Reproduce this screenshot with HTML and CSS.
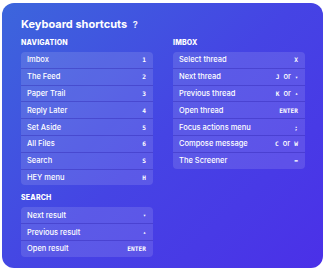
FILE: index.html
```html
<!DOCTYPE html>
<html lang="en">
<head>
    <meta charset="UTF-8">
    <meta name="viewport" content="width=device-width, initial-scale=1.0">
    <title>Keyboard shortcuts</title>
    <link rel="stylesheet" href="styles.css">
</head>
<body>
    <div class="panel">
        <h1 class="title">Keyboard shortcuts <span class="help">?</span></h1>
        <div class="columns">
            <div class="column">
                <h2 class="section">Navigation</h2>
                <ul class="card">
                    <li class="row"><span>Imbox</span><kbd>1</kbd></li>
                    <li class="row"><span>The Feed</span><kbd>2</kbd></li>
                    <li class="row"><span>Paper Trail</span><kbd>3</kbd></li>
                    <li class="row"><span>Reply Later</span><kbd>4</kbd></li>
                    <li class="row"><span>Set Aside</span><kbd>5</kbd></li>
                    <li class="row"><span>All Files</span><kbd>6</kbd></li>
                    <li class="row"><span>Search</span><kbd>S</kbd></li>
                    <li class="row"><span>HEY menu</span><kbd>H</kbd></li>
                </ul>
                <h2 class="section section-gap">Search</h2>
                <ul class="card">
                    <li class="row"><span>Next result</span><kbd class="arrow">&#9662;</kbd></li>
                    <li class="row"><span>Previous result</span><kbd class="arrow">&#9652;</kbd></li>
                    <li class="row"><span>Open result</span><kbd>ENTER</kbd></li>
                </ul>
            </div>
            <div class="column">
                <h2 class="section">Imbox</h2>
                <ul class="card">
                    <li class="row"><span>Select thread</span><kbd>X</kbd></li>
                    <li class="row"><span>Next thread</span><span class="keys"><kbd>J</kbd><em>or</em><kbd class="arrow">&#9662;</kbd></span></li>
                    <li class="row"><span>Previous thread</span><span class="keys"><kbd>K</kbd><em>or</em><kbd class="arrow">&#9652;</kbd></span></li>
                    <li class="row"><span>Open thread</span><kbd>ENTER</kbd></li>
                    <li class="row"><span>Focus actions menu</span><kbd>;</kbd></li>
                    <li class="row"><span>Compose message</span><span class="keys"><kbd>C</kbd><em>or</em><kbd>W</kbd></span></li>
                    <li class="row"><span>The Screener</span><kbd>=</kbd></li>
                </ul>
            </div>
        </div>
    </div>
</body>
</html>
```

FILE: styles.css
```css
body{
    margin: 0;
    background-color: #fff;
    font-family: Inter, "Noto Sans", sans-serif;
}
.panel{
    box-sizing: border-box;
    width: 321px;
    height: 265px;
    margin: 3px 0 0 2px;
    padding: 13px 17px 0 19px;
    border-radius: 12px;
    background: linear-gradient(135deg, #3c66dc 0%, #4544e4 50%, #4b30e8 100%);
    color: #fff;
}
.title{
    margin: 0;
    font-size: 11px;
    line-height: 16px;
    font-weight: 700;
}
.help{
    margin-left: 3px;
    font-size: 9px;
    opacity: 0.9;
}
.columns{
    display: grid;
    grid-template-columns: 132px 132px;
    gap: 20px;
    margin-top: 5px;
}
.section{
    margin: 0 0 4px;
    font-size: 7px;
    line-height: 10px;
    font-weight: 800;
    text-transform: uppercase;
    letter-spacing: 0.2px;
}
.section-gap{
    margin-top: 8px;
}
.card{
    list-style: none;
    margin: 0;
    padding: 0;
    border-radius: 4px;
    background-color: rgba(255,255,255,0.12);
}
.row{
    display: flex;
    justify-content: space-between;
    align-items: center;
    height: 15.8px;
    padding: 0 7px 0 6px;
    font-size: 7.5px;
    font-weight: 500;
    border-top: 1px solid rgba(40,30,170,0.35);
}
.row:first-child{
    border-top: none;
}
kbd{
    font-family: "DejaVu Sans Mono", "Liberation Mono", monospace;
    font-size: 6.2px;
    font-weight: 700;
}
kbd.arrow{
    font-size: 5px;
}
.keys{
    display: flex;
    align-items: center;
    gap: 4px;
}
.keys em{
    font-style: normal;
    font-size: 7.5px;
}
```
